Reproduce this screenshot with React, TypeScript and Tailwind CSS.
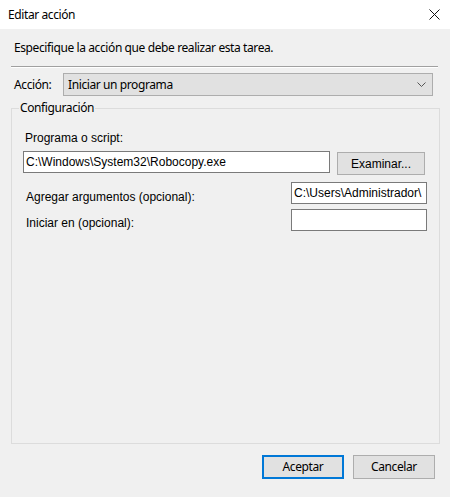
import React from 'react';

const ui = "font-['Noto_Sans','Open_Sans',sans-serif] tracking-[-0.4px]";
const ms = "font-['Liberation_Sans',Arial,sans-serif] tracking-normal";

function TextBox({ value, className }: { value?: string; className: string }) {
  return (
    <div
      className={`h-[22px] overflow-hidden whitespace-nowrap border border-[#7a7a7a] bg-white pl-[2px] text-[12px] leading-[20px] text-black ${ms} ${className}`}
    >
      {value}
    </div>
  );
}

export default function App() {
  return (
    <div className={`flex h-[497px] w-[450px] flex-col bg-[#f0f0f0] text-black ${ui}`}>
      <div className="flex h-[29px] items-center justify-between bg-white pl-[8px] pr-[8px]">
        <span className="text-[12px] leading-[16px]">Editar acción</span>
        <svg width="11" height="11" viewBox="0 0 11 11" className="mr-[2px]">
          <path d="M0.5 0.5 L10.5 10.5 M10.5 0.5 L0.5 10.5" stroke="#111" strokeWidth="1" fill="none" />
        </svg>
      </div>

      <div className="flex flex-col px-[11px]">
        <p className="mt-[11px] pl-[3px] text-[12px] leading-[16px]">
          Especifique la acción que debe realizar esta tarea.
        </p>
        <div className="mt-[10px] w-[427px] border-t border-b border-t-[#a0a0a0] border-b-white" />

        <div className="mt-[5px] flex items-center">
          <span className="w-[52px] pl-[3px] text-[12px] leading-[16px]">Acción:</span>
          <div className="flex h-[23px] w-[370px] items-center justify-between border border-[#adadad] bg-[#e1e1e1] pl-[4px] pr-[6px]">
            <span className="text-[12px] leading-[16px]">Iniciar un programa</span>
            <svg width="9" height="5" viewBox="0 0 9 5">
              <path d="M0.5 0.5 L4.5 4.5 L8.5 0.5" stroke="#555" strokeWidth="1" fill="none" />
            </svg>
          </div>
        </div>

        <fieldset className="mt-[4px] h-[344px] w-[429px] border border-[#dcdcdc] pl-[11px]">
          <legend className="-ml-[4px] px-[1px] text-[12px] leading-[16px]">Configuración</legend>

          <p className={`mt-[15px] pl-[2px] text-[12px] leading-[14px] ${ms}`}>Programa o script:</p>
          <div className="mt-[6px] flex items-start">
            <TextBox value="C:\Windows\System32\Robocopy.exe" className="w-[307px]" />
            <button
              className={`ml-[7px] mt-[1px] h-[23px] w-[88px] border border-[#adadad] bg-[#e1e1e1] text-[12px] leading-[20px] ${ms}`}
            >
              Examinar...
            </button>
          </div>

          <div className="mt-[7px] flex items-start">
            <span className={`mt-[8px] w-[268px] pl-[3px] text-[12px] leading-[14px] ${ms}`}>
              Agregar argumentos (opcional):
            </span>
            <TextBox value="C:\Users\Administrador\" className="w-[136px]" />
          </div>

          <div className="mt-[5px] flex items-start">
            <span className={`mt-[7px] w-[268px] pl-[3px] text-[12px] leading-[14px] ${ms}`}>
              Iniciar en (opcional):
            </span>
            <TextBox className="w-[136px]" />
          </div>
        </fieldset>
      </div>

      <div className="mt-[11px] flex justify-end gap-[9px] pr-[15px]">
        <button className="h-[24px] w-[82px] border-2 border-[#0078d7] bg-[#e1e1e1] text-[12px] leading-[16px]">
          Aceptar
        </button>
        <button className="h-[24px] w-[82px] border border-[#adadad] bg-[#e1e1e1] text-[12px] leading-[16px]">
          Cancelar
        </button>
      </div>
    </div>
  );
}
